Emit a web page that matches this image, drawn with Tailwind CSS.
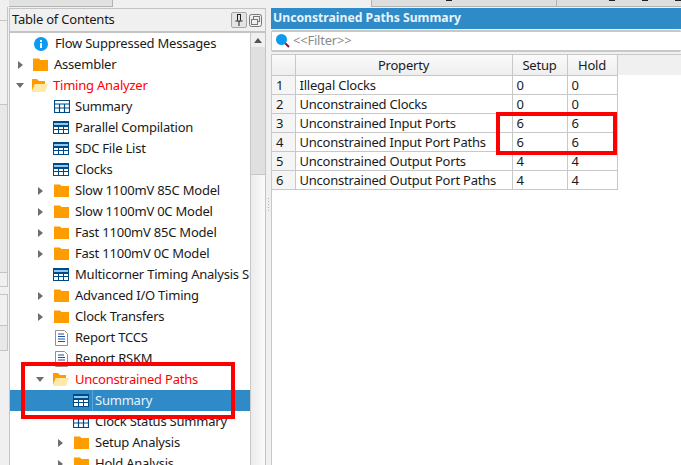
<!DOCTYPE html>
<html lang="en">

<head>
  <meta charset="UTF-8">
  <script src="https://cdn.jsdelivr.net/npm/@tailwindcss/browser@4"></script>
  <title>Table of Contents</title>
</head>

<body class="relative w-[681px] h-[465px] overflow-hidden bg-[#f0f0f0] font-['Noto_Sans',sans-serif] text-[13px] tracking-[-0.22px] text-[#1a1a1a]">

  <svg class="hidden">
    <symbol id="folder" viewBox="0 0 15 15">
      <path d="M0 1.500h6l1.500 1.500h7.500v11H0z" fill="#ff9c00" />
    </symbol>
    <symbol id="folder-open" viewBox="0 0 17 15">
      <path d="M1 1h5l2 2h6v3H4l-3 7z" fill="#ff9c00" />
      <path d="M1 14l3-8h13l-3 8z" fill="#ffe9a8" />
    </symbol>
    <symbol id="table" viewBox="0 0 16 13">
      <path d="M.5.5h15v12H.5zM0 4h16M0 8h16M5.500 4v9M10.500 4v9" fill="none" stroke="#004a86" stroke-width="1.200" />
    </symbol>
    <symbol id="table-head" viewBox="0 0 16 13">
      <rect x="0" y="0" width="16" height="13" fill="#004a86" />
      <rect x="1" y="2" width="14" height="2" fill="#8ec8f0" />
      <path d="M1 6h4v2H1zM6 6h4v2H6zM11 6h4v2h-4zM1 9h4v3H1zM6 9h4v3H6zM11 9h4v3h-4z" fill="#fff" />
    </symbol>
    <symbol id="report" viewBox="0 0 13 16">
      <path d="M.5.500h9l3 3v12H.5z" fill="#fff" stroke="#a08c7c" />
      <path d="M3 4h6M3 6.500h7M3 9h7M3 11.500h7" stroke="#1f4fa0" />
    </symbol>
    <symbol id="arrow-right" viewBox="0 0 5 8">
      <path d="M0 0l5 4-5 4z" fill="#6e6e6e" />
    </symbol>
    <symbol id="arrow-down" viewBox="0 0 8 5">
      <path d="M0 0h8L4 5z" fill="#6e6e6e" />
    </symbol>
  </svg>

  <!-- top tabs -->
  <div class="flex h-[7px] pl-[9px]">
    <div class="w-[105px] bg-[#e1e1e1] border-r border-b border-[#b4b4b4]"></div>
    <div class="w-[259px]"></div>
    <div class="w-[187px] bg-[#dedede] border-l border-r border-b border-[#b4b4b4]">
      <div class="ml-[74px] w-[6px] h-[1px] bg-[#222]"></div>
    </div>
    <div class="flex-1 flex gap-[27px] pl-[52px] bg-[#dedede] border-b border-[#b4b4b4]">
      <div class="w-[6px] h-[1px] bg-[#222]"></div>
      <div class="w-[6px] h-[1px] bg-[#222]"></div>
      <div class="w-[6px] h-[1px] bg-[#222]"></div>
    </div>
  </div>

  <div class="flex h-[458px] items-start">
    <!-- left gutter -->
    <div class="w-[9px] h-[458px] shrink-0 flex flex-col relative">
      <div class="h-[14px] w-[8px] border-r border-b border-[#c4c4c4]"></div>
      <div class="h-[84px] w-[8px] border-r border-b border-[#c4c4c4]"></div>
      <div class="h-[168px] w-[8px] bg-[#e8e8e8] border-r border-b border-[#c4c4c4]"></div>
      <div class="h-[14px] w-[8px] border-r border-b border-[#c4c4c4]"></div>
      <div class="h-[7px]"></div>
      <div class="h-[31px] w-[8px] border-r border-t border-[#c4c4c4]"></div>
      <div class="h-[25px] w-[8px] bg-[#e8e8e8] border-r border-t border-[#c4c4c4]"></div>
      <div class="flex-1 w-[8px] border-t border-[#c4c4c4]"></div>
    </div>

    <!-- table of contents -->
    <div class="w-[257px] h-[458px] shrink-0 flex flex-col border-l border-t border-r border-[#c4c4c4] mt-[1px]">
      <div class="h-[24px] shrink-0 flex items-center justify-between pl-[2px] pr-[3px] border-b-2 border-[#c4c4c4]">
        <span class="text-[13px]">Table of Contents</span>
        <div class="flex items-center gap-[2px]">
          <div class="w-[16px] h-[16px] flex items-center justify-center rounded-[2px] bg-[#e4e4e4] border border-[#a8a8a8]">
            <svg width="10" height="12" viewBox="0 0 10 12"><path d="M3 .500h4M3.500.500v6M6.500.500v6M1.500 7h7M5 7v5" fill="none" stroke="#222" /></svg>
          </div>
          <svg width="13" height="13" viewBox="0 0 13 13"><rect x=".5" y=".5" width="12" height="12" rx="2" fill="none" stroke="#777" /><rect x="4.500" y="2.500" width="6" height="5" fill="none" stroke="#777" /><rect x="2.500" y="5.500" width="6" height="5" fill="#f0f0f0" stroke="#777" /></svg>
        </div>
      </div>

      <div class="flex flex-1 min-h-0">
        <!-- tree -->
        <ul class="w-[240px] shrink-0 bg-white overflow-hidden whitespace-nowrap">
          <li class="h-[21px] flex items-center pl-[24px]">
            <svg class="mr-[7px] shrink-0" width="14" height="14" viewBox="0 0 14 14"><circle cx="7" cy="7" r="7" fill="#0a9cf0" /><path d="M6 3h2v2H6zM6 6h2v5H6z" fill="#fff" /></svg>
            <span>Flow Suppressed Messages</span>
          </li>
          <li class="h-[21px] flex items-center pl-[7px]">
            <svg class="w-[5px] h-[8px] mr-[10px] ml-[1px] shrink-0"><use href="#arrow-right" /></svg>
            <svg class="w-[15px] h-[15px] mr-[6px] shrink-0"><use href="#folder" /></svg>
            <span>Assembler</span>
          </li>
          <li class="h-[21px] flex items-center pl-[6px]">
            <svg class="w-[8px] h-[5px] mr-[7px] shrink-0"><use href="#arrow-down" /></svg>
            <svg class="w-[17px] h-[15px] mr-[5px] shrink-0"><use href="#folder-open" /></svg>
            <span class="text-[#ff0000]">Timing Analyzer</span>
          </li>
          <li class="h-[21px] flex items-center pl-[44px]">
            <svg class="w-[16px] h-[13px] mr-[5px] shrink-0"><use href="#table" /></svg>
            <span>Summary</span>
          </li>
          <li class="h-[21px] flex items-center pl-[43px]">
            <svg class="w-[16px] h-[13px] mr-[6px] shrink-0"><use href="#table-head" /></svg>
            <span>Parallel Compilation</span>
          </li>
          <li class="h-[21px] flex items-center pl-[43px]">
            <svg class="w-[16px] h-[13px] mr-[6px] shrink-0"><use href="#table-head" /></svg>
            <span>SDC File List</span>
          </li>
          <li class="h-[21px] flex items-center pl-[43px]">
            <svg class="w-[16px] h-[13px] mr-[6px] shrink-0"><use href="#table-head" /></svg>
            <span>Clocks</span>
          </li>
          <li class="h-[21px] flex items-center pl-[28px]">
            <svg class="w-[5px] h-[8px] mr-[11px] shrink-0"><use href="#arrow-right" /></svg>
            <svg class="w-[15px] h-[15px] mr-[6px] shrink-0"><use href="#folder" /></svg>
            <span>Slow 1100mV 85C Model</span>
          </li>
          <li class="h-[21px] flex items-center pl-[28px]">
            <svg class="w-[5px] h-[8px] mr-[11px] shrink-0"><use href="#arrow-right" /></svg>
            <svg class="w-[15px] h-[15px] mr-[6px] shrink-0"><use href="#folder" /></svg>
            <span>Slow 1100mV 0C Model</span>
          </li>
          <li class="h-[21px] flex items-center pl-[28px]">
            <svg class="w-[5px] h-[8px] mr-[11px] shrink-0"><use href="#arrow-right" /></svg>
            <svg class="w-[15px] h-[15px] mr-[6px] shrink-0"><use href="#folder" /></svg>
            <span>Fast 1100mV 85C Model</span>
          </li>
          <li class="h-[21px] flex items-center pl-[28px]">
            <svg class="w-[5px] h-[8px] mr-[11px] shrink-0"><use href="#arrow-right" /></svg>
            <svg class="w-[15px] h-[15px] mr-[6px] shrink-0"><use href="#folder" /></svg>
            <span>Fast 1100mV 0C Model</span>
          </li>
          <li class="h-[21px] flex items-center pl-[43px]">
            <svg class="w-[16px] h-[13px] mr-[6px] shrink-0"><use href="#table-head" /></svg>
            <span>Multicorner Timing Analysis Summary</span>
          </li>
          <li class="h-[21px] flex items-center pl-[28px]">
            <svg class="w-[5px] h-[8px] mr-[11px] shrink-0"><use href="#arrow-right" /></svg>
            <svg class="w-[15px] h-[15px] mr-[6px] shrink-0"><use href="#folder" /></svg>
            <span>Advanced I/O Timing</span>
          </li>
          <li class="h-[21px] flex items-center pl-[28px]">
            <svg class="w-[5px] h-[8px] mr-[11px] shrink-0"><use href="#arrow-right" /></svg>
            <svg class="w-[15px] h-[15px] mr-[6px] shrink-0"><use href="#folder" /></svg>
            <span>Clock Transfers</span>
          </li>
          <li class="h-[21px] flex items-center pl-[45px]">
            <svg class="w-[13px] h-[16px] mr-[7px] shrink-0"><use href="#report" /></svg>
            <span>Report TCCS</span>
          </li>
          <li class="h-[21px] flex items-center pl-[45px]">
            <svg class="w-[13px] h-[16px] mr-[7px] shrink-0"><use href="#report" /></svg>
            <span>Report RSKM</span>
          </li>
          <li class="h-[21px] flex items-center pl-[26px]">
            <svg class="w-[8px] h-[5px] mr-[8px] shrink-0"><use href="#arrow-down" /></svg>
            <svg class="w-[17px] h-[15px] mr-[6px] shrink-0"><use href="#folder-open" /></svg>
            <span class="text-[#ff0000]">Unconstrained Paths</span>
          </li>
          <li class="h-[21px] flex items-center pl-[63px] bg-[#2e8bc8] text-[#e8f3fb]">
            <svg class="w-[16px] h-[13px] mr-[3px] shrink-0"><use href="#table-head" /></svg>
            <span class="flex-1 self-stretch flex items-center pl-[2px] border-l border-[#5ba6d8]">Summary</span>
          </li>
          <li class="h-[21px] flex items-center pl-[63px]">
            <svg class="w-[16px] h-[13px] mr-[6px] shrink-0"><use href="#table" /></svg>
            <span>Clock Status Summary</span>
          </li>
          <li class="h-[21px] flex items-center pl-[48px]">
            <svg class="w-[5px] h-[8px] mr-[11px] shrink-0"><use href="#arrow-right" /></svg>
            <svg class="w-[15px] h-[15px] mr-[6px] shrink-0"><use href="#folder" /></svg>
            <span>Setup Analysis</span>
          </li>
          <li class="h-[21px] flex items-center pl-[48px]">
            <svg class="w-[5px] h-[8px] mr-[11px] shrink-0"><use href="#arrow-right" /></svg>
            <svg class="w-[15px] h-[15px] mr-[6px] shrink-0"><use href="#folder" /></svg>
            <span>Hold Analysis</span>
          </li>
        </ul>

        <!-- scrollbar -->
        <div class="w-[15px] shrink-0 flex flex-col bg-gradient-to-r from-[#ececec] to-[#fafafa] border-l border-[#c8c8c8]">
          <div class="h-[14px] flex items-center justify-center bg-[#f0f0f0]">
            <svg width="8" height="5" viewBox="0 0 8 5"><path d="M4 0l4 5H0z" fill="#555" /></svg>
          </div>
          <div class="h-[128px] bg-[#e0e0e0] border-b border-[#c8c8c8]"></div>
        </div>
      </div>
    </div>

    <!-- splitter -->
    <div class="w-[5px] h-[458px] shrink-0 flex flex-col items-center justify-center gap-[2px] pb-[64px]">
      <div class="w-[1px] h-[1px] bg-[#b0b0b0]"></div>
      <div class="w-[1px] h-[1px] bg-[#b0b0b0]"></div>
      <div class="w-[1px] h-[1px] bg-[#b0b0b0]"></div>
      <div class="w-[1px] h-[1px] bg-[#b0b0b0]"></div>
      <div class="w-[1px] h-[1px] bg-[#b0b0b0]"></div>
    </div>

    <!-- report pane -->
    <div class="flex-1 min-w-0 h-[458px] mt-[1px] flex flex-col">
      <div class="h-[21px] shrink-0 flex items-center pl-[2px] bg-[#2e8bc8] text-[#e8f3fb] text-[12.2px] tracking-normal font-bold">Unconstrained Paths Summary</div>
      <div class="h-[22px] shrink-0 mt-[1px] flex items-center pl-[4px] bg-white border-t-2 border-l border-b-2 border-[#c8c8c8] rounded-[2px] text-[#8a8a8a]">
        <svg class="mr-[3px] shrink-0" width="14" height="14" viewBox="0 0 14 14"><path d="M9 9l4 4" stroke="#a01020" stroke-width="2" /><circle cx="5.500" cy="5.500" r="5.500" fill="#0a9cf0" /></svg>
        <span>&lt;&lt;Filter&gt;&gt;</span>
      </div>
      <div class="flex-1 mt-[2px] bg-white border-l border-t border-[#c8c8c8]">
        <table class="border-collapse table-fixed w-full text-[13px] leading-[18px]">
          <colgroup>
            <col class="w-[23px]">
            <col class="w-[217px]">
            <col class="w-[55px]">
            <col class="w-[50px]">
            <col>
          </colgroup>
          <thead>
            <tr class="h-[20px]">
              <th class="p-0 font-normal bg-gradient-to-b from-[#fafafa] to-[#eeeeee] border-r border-b border-[#c8c8c8]"></th>
              <th class="p-0 font-normal bg-gradient-to-b from-[#fafafa] to-[#eeeeee] border-r border-b border-[#c8c8c8] text-center">Property</th>
              <th class="p-0 font-normal bg-gradient-to-b from-[#fafafa] to-[#eeeeee] border-r border-b border-[#c8c8c8] text-center">Setup</th>
              <th class="p-0 font-normal bg-gradient-to-b from-[#fafafa] to-[#eeeeee] border-r border-b border-[#c8c8c8] text-center">Hold</th>
              <th class="p-0 bg-[#f0f0f0]"></th>
            </tr>
          </thead>
          <tbody>
            <tr class="h-[19px]">
              <td class="p-0 pl-[4px] bg-[#f5f5f5] border border-l-0 border-[#c8c8c8]">1</td>
              <td class="p-0 pl-[4px] border border-[#c8c8c8]">Illegal Clocks</td>
              <td class="p-0 pl-[4px] border border-[#c8c8c8]">0</td>
              <td class="p-0 pl-[4px] border border-[#c8c8c8]">0</td>
            </tr>
            <tr class="h-[19px]">
              <td class="p-0 pl-[4px] bg-[#f5f5f5] border border-l-0 border-[#c8c8c8]">2</td>
              <td class="p-0 pl-[4px] border border-[#c8c8c8]">Unconstrained Clocks</td>
              <td class="p-0 pl-[4px] border border-[#c8c8c8]">0</td>
              <td class="p-0 pl-[4px] border border-[#c8c8c8]">0</td>
            </tr>
            <tr class="h-[19px]">
              <td class="p-0 pl-[4px] bg-[#f5f5f5] border border-l-0 border-[#c8c8c8]">3</td>
              <td class="p-0 pl-[4px] border border-[#c8c8c8]">Unconstrained Input Ports</td>
              <td class="p-0 pl-[4px] border border-[#c8c8c8]">6</td>
              <td class="p-0 pl-[4px] border border-[#c8c8c8]">6</td>
            </tr>
            <tr class="h-[19px]">
              <td class="p-0 pl-[4px] bg-[#f5f5f5] border border-l-0 border-[#c8c8c8]">4</td>
              <td class="p-0 pl-[4px] border border-[#c8c8c8]">Unconstrained Input Port Paths</td>
              <td class="p-0 pl-[4px] border border-[#c8c8c8]">6</td>
              <td class="p-0 pl-[4px] border border-[#c8c8c8]">6</td>
            </tr>
            <tr class="h-[19px]">
              <td class="p-0 pl-[4px] bg-[#f5f5f5] border border-l-0 border-[#c8c8c8]">5</td>
              <td class="p-0 pl-[4px] border border-[#c8c8c8]">Unconstrained Output Ports</td>
              <td class="p-0 pl-[4px] border border-[#c8c8c8]">4</td>
              <td class="p-0 pl-[4px] border border-[#c8c8c8]">4</td>
            </tr>
            <tr class="h-[19px]">
              <td class="p-0 pl-[4px] bg-[#f5f5f5] border border-l-0 border-[#c8c8c8]">6</td>
              <td class="p-0 pl-[4px] border border-[#c8c8c8]">Unconstrained Output Port Paths</td>
              <td class="p-0 pl-[4px] border border-[#c8c8c8]">4</td>
              <td class="p-0 pl-[4px] border border-[#c8c8c8]">4</td>
            </tr>
          </tbody>
        </table>
      </div>
    </div>
  </div>

  <!-- red annotation boxes -->
  <div class="absolute left-[21px] top-[362px] w-[214px] h-[57px] border-4 border-[#ff0000]"></div>
  <div class="absolute left-[496px] top-[112px] w-[121px] h-[43px] border-4 border-[#ff0000]"></div>

</body>

</html>
